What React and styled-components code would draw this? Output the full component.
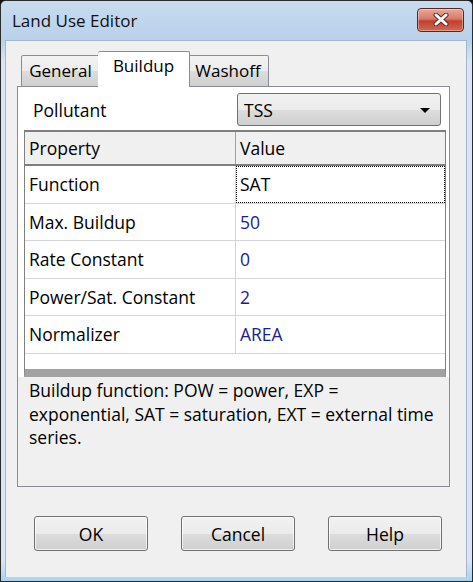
import React, { useState } from 'react';
import styled, { createGlobalStyle } from 'styled-components';

const colors = {
  frame: '#b9d1ea',
  frameLight: '#d7e5f4',
  outline: '#2b2b2b',
  client: '#f0f0f0',
  border: '#898c95',
  gridBorder: '#7f7f7f',
  rowLine: '#d5d5d5',
  value: '#1c1c8c',
};

const font = '"Open Sans", "Noto Sans", "DejaVu Sans", sans-serif';
const textSize = '17.5px';

const GlobalStyle = createGlobalStyle`
  html, body {
    margin: 0;
    padding: 0;
    background: #111;
  }
  body {
    font-family: ${font};
    font-size: ${textSize};
    color: #000;
  }
  * {
    box-sizing: border-box;
  }
`;

const Window = styled.div`
  width: 473px;
  height: 582px;
  display: flex;
  flex-direction: column;
  border: 1px solid ${colors.outline};
  border-radius: 6px 6px 0 0;
  background: linear-gradient(#cadcf0, ${colors.frame} 40px, ${colors.frameLight} 60px, ${colors.frameLight} 560px, #a9d2ef);
  overflow: hidden;
`;

const TitleBar = styled.div`
  height: 39px;
  flex: none;
  display: flex;
  align-items: center;
  justify-content: space-between;
  padding: 0 8px 0 11px;
  background: linear-gradient(#c8dbf0, #b9d1ea);
`;

const Title = styled.span`
  font-size: 17px;
  color: #111;
`;

const CloseButton = styled.button`
  width: 47px;
  height: 24px;
  margin-top: -2px;
  padding: 0;
  display: flex;
  align-items: center;
  justify-content: center;
  border: 1px solid #5a2620;
  border-radius: 4px;
  background: linear-gradient(#e9a99a, #d77a68 45%, #c0402c 55%, #d36a50);
  box-shadow: inset 0 0 0 1px rgba(255, 255, 255, 0.35);
`;

const Client = styled.div`
  flex: 1;
  margin: 0 5px 4px 4px;
  background: ${colors.client};
  border: 1px solid #a3b6cc;
  border-bottom: none;
  padding: 11px 0 0 11px;
  display: flex;
  flex-direction: column;
`;

const TabRow = styled.div`
  display: flex;
  align-items: flex-end;
  height: 35px;
  margin-left: 4px;
  position: relative;
  z-index: 1;
  margin-bottom: -1px;
`;

const Tab = styled.div`
  width: ${({ $w }) => $w}px;
  height: ${({ $active }) => ($active ? 36 : 32)}px;
  margin: 0 ${({ $active }) => ($active ? -2 : 0)}px;
  padding-top: ${({ $active }) => ($active ? 2 : 3)}px;
  text-align: center;
  font-size: 17px;
  border: 1px solid ${colors.border};
  border-bottom: ${({ $active }) => ($active ? 'none' : `1px solid ${colors.border}`)};
  border-radius: 2px 2px 0 0;
  background: ${({ $active }) =>
    $active ? '#fff' : 'linear-gradient(#f3f3f3, #ebebeb 50%, #dddddd 51%, #cfcfcf)'};
  position: relative;
  z-index: ${({ $active }) => ($active ? 2 : 0)};
  & + & {
    border-left: ${({ $active }) => ($active ? `1px solid ${colors.border}` : 'none')};
  }
`;

const TabPanel = styled.div`
  width: 433px;
  height: 401px;
  border: 1px solid ${colors.border};
  background: #fff;
  display: flex;
  flex-direction: column;
`;

const PollutantRow = styled.div`
  display: flex;
  align-items: center;
  justify-content: space-between;
  height: 43px;
  padding: 2px 8px 0 15px;
`;

const Label = styled.span`
  font-size: ${textSize};
`;

const Select = styled.div`
  width: 204px;
  height: 33px;
  display: flex;
  align-items: center;
  justify-content: space-between;
  padding: 0 10px 0 6px;
  border: 1px solid #707070;
  border-radius: 3px;
  background: linear-gradient(#f2f2f2, #ebebeb 50%, #dddddd 51%, #cfcfcf);
  font-size: ${textSize};
`;

const Arrow = styled.span`
  width: 0;
  height: 0;
  border-left: 5px solid transparent;
  border-right: 5px solid transparent;
  border-top: 5px solid #000;
  margin-top: 1px;
`;

const Grid = styled.div`
  margin: 0 3px 0 6px;
  border-left: 1px solid ${colors.gridBorder};
  border-right: 1px solid ${colors.gridBorder};
  border-bottom: 8px solid #a2a2a2;
  background: #fff;
  height: 247px;
`;

const Row = styled.div`
  display: grid;
  grid-template-columns: 211px 1fr;
  height: ${({ $header }) => ($header ? 36 : 37.5)}px;
  border-top: ${({ $header }) => ($header ? `2px solid ${colors.gridBorder}` : 'none')};
  border-bottom: ${({ $header }) => ($header ? `2px solid ${colors.gridBorder}` : `1px solid ${colors.rowLine}`)};
  background: ${({ $header }) => ($header ? '#f0f0f0' : '#fff')};
`;

const Cell = styled.div`
  display: flex;
  align-items: center;
  padding-left: 4px;
  font-size: ${textSize};
  color: ${({ $blue }) => ($blue ? colors.value : '#000')};
  border-right: ${({ $first, $header }) =>
    $first ? `1px solid ${$header ? '#a0a0a0' : colors.rowLine}` : 'none'};
  outline: ${({ $focus }) => ($focus ? '1px dotted #000' : 'none')};
  outline-offset: -1px;
`;

const Hint = styled.div`
  flex: 1;
  background: ${colors.client};
  padding: 2px 8px 0 11px;
  font-size: ${textSize};
  line-height: 23.5px;
`;

const ButtonRow = styled.div`
  display: flex;
  gap: 33px;
  padding: 29px 0 0 17px;
`;

const Button = styled.button`
  width: 114px;
  height: 35px;
  font-family: ${font};
  font-size: ${textSize};
  color: #000;
  border: 1px solid #707070;
  border-radius: 3px;
  background: linear-gradient(#f2f2f2, #ebebeb 50%, #dddddd 51%, #cfcfcf);
  box-shadow: inset 0 0 0 1px rgba(255, 255, 255, 0.7);
`;

const CloseIcon = () => (
  <svg width="16" height="13" viewBox="0 0 16 13">
    <path d="M3 2 L13 11 M13 2 L3 11" stroke="#5b2a22" strokeWidth="5" strokeLinecap="round" />
    <path d="M3 2 L13 11 M13 2 L3 11" stroke="#fff" strokeWidth="3" strokeLinecap="round" />
  </svg>
);

const properties = [
  { name: 'Function', value: 'SAT', focus: true },
  { name: 'Max. Buildup', value: '50', blue: true },
  { name: 'Rate Constant', value: '0', blue: true },
  { name: 'Power/Sat. Constant', value: '2', blue: true },
  { name: 'Normalizer', value: 'AREA', blue: true },
];

const tabs = [
  { label: 'General', w: 79 },
  { label: 'Buildup', w: 92 },
  { label: 'Washoff', w: 81 },
];

const App = () => {
  const [active, setActive] = useState('Buildup');

  return (
    <>
      <GlobalStyle />
      <Window>
        <TitleBar>
          <Title>Land Use Editor</Title>
          <CloseButton aria-label="Close"><CloseIcon /></CloseButton>
        </TitleBar>
        <Client>
          <TabRow>
            {tabs.map((t) => (
              <Tab key={t.label} $w={t.w} $active={t.label === active} onClick={() => setActive(t.label)}>
                {t.label}
              </Tab>
            ))}
          </TabRow>
          <TabPanel>
            <PollutantRow>
              <Label>Pollutant</Label>
              <Select>
                <span>TSS</span>
                <Arrow />
              </Select>
            </PollutantRow>
            <Grid>
              <Row $header>
                <Cell $first $header>Property</Cell>
                <Cell>Value</Cell>
              </Row>
              {properties.map((p) => (
                <Row key={p.name}>
                  <Cell $first>{p.name}</Cell>
                  <Cell $blue={p.blue} $focus={p.focus}>{p.value}</Cell>
                </Row>
              ))}
            </Grid>
            <Hint>
              Buildup function: POW = power, EXP = exponential, SAT = saturation, EXT = external time series.
            </Hint>
          </TabPanel>
          <ButtonRow>
            <Button>OK</Button>
            <Button>Cancel</Button>
            <Button>Help</Button>
          </ButtonRow>
        </Client>
      </Window>
    </>
  );
};

export default App;
